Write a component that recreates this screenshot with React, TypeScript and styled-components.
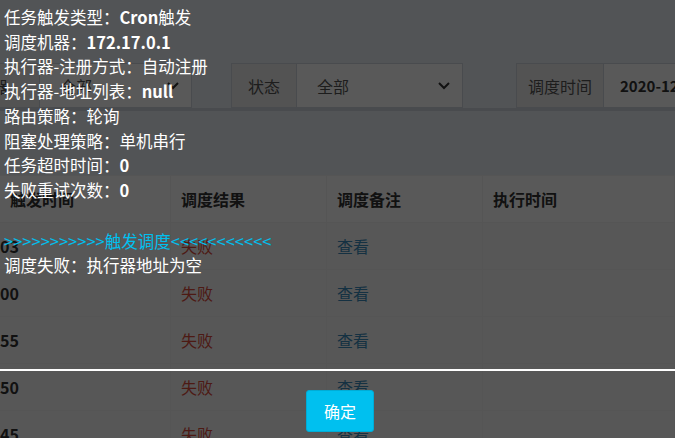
import React from "react";
import styled, { createGlobalStyle } from "styled-components";

const G = createGlobalStyle`
  html,body{margin:0;padding:0;background:#ecf0f5;overflow:hidden;}
  body{font-family:"Noto Sans CJK SC","Noto Sans",sans-serif;}
`;
const Page = styled.div`width:675px;height:438px;position:relative;overflow:hidden;background:#ecf0f5;`;
const Filters = styled.div`display:flex;align-items:stretch;height:45px;margin-top:63px;gap:0;`;
const Group = styled.div<{ ml: number; w: number }>`display:flex;margin-left:${p => p.ml}px;width:${p => p.w}px;flex:none;`;
const Addon = styled.div<{ w: number }>`width:${p => p.w}px;flex:none;background:#eee;border:1px solid #d2d6de;display:flex;align-items:center;justify-content:center;font-size:16px;color:#555;box-sizing:border-box;`;
const Sel = styled.div`flex:1;border:1px solid #d2d6de;border-left:none;background:#fff;display:flex;align-items:center;justify-content:space-between;padding:0 12px 0 20px;font-size:16px;color:#555;box-sizing:border-box;`;
const Inp = styled(Sel)`font-weight:bold;font-size:15px;color:#333;padding-left:16px;`;
const Band = styled.div`height:3px;background:#d2d6de;margin-top:0;`;
const Box = styled.div`background:#fff;margin-top:64px;`;
const Row = styled.div<{ head?: boolean }>`display:grid;grid-template-columns:171px 156px 156px 1fr;height:46px;border-top:1px solid #f4f4f4;background:${p => (p.head ? "#fff" : "#f9f9f9")};`;
const Cell = styled.div<{ c?: string; b?: boolean }>`display:flex;align-items:center;padding-left:10px;border-right:1px solid #f4f4f4;font-size:16px;color:${p => p.c || "#333"};font-weight:${p => (p.b ? "bold" : "normal")};`;
const Overlay = styled.div`position:absolute;inset:0;background:rgba(0,0,0,0.65);`;
const Msg = styled.div`position:absolute;left:4px;top:5px;color:#fff;font-size:16.5px;line-height:24.7px;`;
const B = styled.span`font-weight:bold;`;
const Cyan = styled.div`color:#00c0ef;margin-top:26px;`;
const Rule = styled.div`position:absolute;left:0;right:0;top:369px;height:2px;background:#fff;`;
const Btn = styled.button`position:absolute;left:306px;top:390px;width:68px;height:42px;background:#00c0ef;border:1px solid #00acd6;border-radius:3px;color:#fff;font-size:16px;font-family:inherit;`;
const Caret = () => (
  <svg width="12" height="8" viewBox="0 0 12 8"><path d="M1 1l5 5 5-5" stroke="#333" strokeWidth="2" fill="none" /></svg>
);

const rows = ["03", "00", "55", "50", "45"];

export default function App() {
  return (
    <Page>
      <G />
      <Filters>
        <Group ml={-40} w={232}><Addon w={80}>器</Addon><Sel>全部<Caret /></Sel></Group>
        <Group ml={39} w={232}><Addon w={66}>状态</Addon><Sel>全部<Caret /></Sel></Group>
        <Group ml={53} w={200}><Addon w={88}>调度时间</Addon><Inp>2020-12</Inp></Group>
      </Filters>
      <Band />
      <Box>
        <Row head>
          <Cell b>触发时间</Cell><Cell b>调度结果</Cell><Cell b>调度备注</Cell><Cell b>执行时间</Cell>
        </Row>
        {rows.map((r, i) => (
          <Row key={i}>
            <Cell b style={{ paddingLeft: 0 }}>{r}</Cell><Cell c="#dd4b39">失败</Cell><Cell c="#3c8dbc">查看</Cell><Cell />
          </Row>
        ))}
      </Box>
      <Overlay />
      <Msg>
        <div>任务触发类型：<B>Cron</B>触发</div>
        <div>调度机器：<B>172.17.0.1</B></div>
        <div>执行器-注册方式：自动注册</div>
        <div>执行器-地址列表：<B>null</B></div>
        <div>路由策略：轮询</div>
        <div>阻塞处理策略：单机串行</div>
        <div>任务超时时间：<B>0</B></div>
        <div>失败重试次数：<B>0</B></div>
        <Cyan>&gt;&gt;&gt;&gt;&gt;&gt;&gt;&gt;&gt;&gt;&gt;触发调度&lt;&lt;&lt;&lt;&lt;&lt;&lt;&lt;&lt;&lt;&lt;</Cyan>
        <div>调度失败：执行器地址为空</div>
      </Msg>
      <Rule />
      <Btn>确定</Btn>
    </Page>
  );
}
